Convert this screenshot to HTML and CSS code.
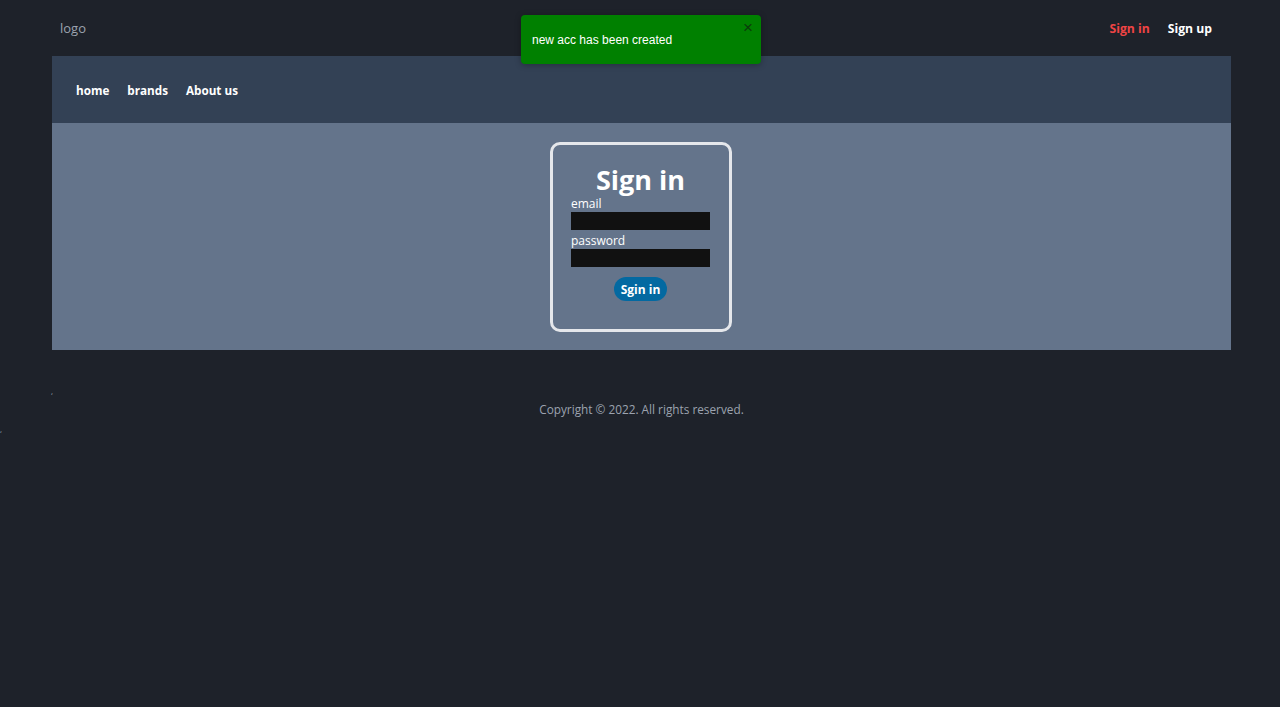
FILE: index.html
```html
<!DOCTYPE html>
<html lang="en">
<head>
<meta charset="utf-8">
<title>Sign in</title>
<link rel="stylesheet" href="styles.css">
</head>
<body>
<div class="page">
  <header class="topbar">
    <span class="logo">logo</span>
    <nav class="auth">
      <a class="auth-link active" href="#">Sign in</a>
      <a class="auth-link" href="#">Sign up</a>
    </nav>
  </header>
  <nav class="mainnav">
    <a href="#">home</a>
    <a href="#">brands</a>
    <a href="#">About us</a>
  </nav>
  <main class="content">
    <form class="card">
      <h1 class="card-title">Sign in</h1>
      <label class="field-label">email</label>
      <div class="field-input"></div>
      <label class="field-label">password</label>
      <div class="field-input"></div>
      <button type="button" class="btn">Sgin in</button>
    </form>
  </main>
  <div class="stray">,</div>
  <footer class="footer">Copyright © 2022. All rights reserved.</footer>
</div>
<div class="stray2">,</div>
<div class="toast">
  <span>new acc has been created</span>
  <span class="toast-close">×</span>
</div>
</body>
</html>
```
FILE: styles.css
```css
* { box-sizing: border-box; }
html, body { margin: 0; padding: 0; }
body {
  background: #1e222a;
  font-family: "Open Sans", "Noto Sans", sans-serif;
  height: 707px;
  overflow: hidden;
  position: relative;
}
.page {
  width: 1179px;
  margin: 0 0 0 52px;
}
.topbar {
  height: 56px;
  display: flex;
  align-items: center;
  justify-content: space-between;
  padding: 0 19px 0 8px;
}
.logo {
  color: #9ca3af;
  font-size: 13px;
}
.auth { display: flex; gap: 18px; }
.auth-link {
  color: #fff;
  font-weight: 700;
  font-size: 12.2px;
  text-decoration: none;
}
.auth-link.active { color: #ef4444; }
.mainnav {
  background: #334155;
  height: 67px;
  display: flex;
  align-items: center;
  gap: 18px;
  padding-left: 24px;
}
.mainnav a {
  color: #fff;
  font-weight: 700;
  font-size: 11.7px;
  text-decoration: none;
}
.content {
  background: #64748b;
  height: 227px;
  display: flex;
  justify-content: center;
  padding: 19px 2px 0 0;
}
.card {
  width: 182px;
  height: 190px;
  border: 3px solid #e5e7eb;
  border-radius: 10px;
  display: flex;
  flex-direction: column;
  align-items: center;
  padding: 17px 0 0;
  margin: 0;
}
.card-title {
  margin: 0;
  color: #fff;
  font-size: 27px;
  font-weight: 700;
  line-height: 36px;
}
.field-label {
  color: #fff;
  font-size: 12px;
  line-height: 17px;
  width: 139px;
  margin-top: -3px;
}
.field-input {
  width: 139px;
  height: 18px;
  background: #111111;
  margin-bottom: 5px;
}
.btn {
  margin-top: 5px;
  background: #0369a1;
  color: #fff;
  border: none;
  border-radius: 12px;
  font-family: inherit;
  font-weight: 700;
  font-size: 12px;
  height: 24px;
  padding: 0 7px;
}
.stray {
  color: #9ca3af;
  font-size: 8px;
  height: 30px;
  padding-top: 37px;
  margin-left: -1px;
  line-height: 8px;
}
.footer {
  text-align: center;
  color: #9ca3af;
  font-size: 11.8px;
  padding-top: 14px;
}
.stray2 {
  color: #9ca3af;
  font-size: 8px;
  margin-top: 6px;
}
.toast {
  position: absolute;
  left: 521px;
  top: 15px;
  width: 240px;
  height: 49px;
  background: #008000;
  border-radius: 4px;
  color: #fff;
  font-family: "Liberation Sans", Arial, sans-serif;
  font-size: 12px;
  display: flex;
  align-items: center;
  padding-left: 11px;
  box-shadow: 0 1px 6px rgba(0,0,0,0.3);
}
.toast-close {
  position: absolute;
  right: 8px;
  top: 3px;
  color: #0b3d0b;
  font-size: 17px;
}
```
